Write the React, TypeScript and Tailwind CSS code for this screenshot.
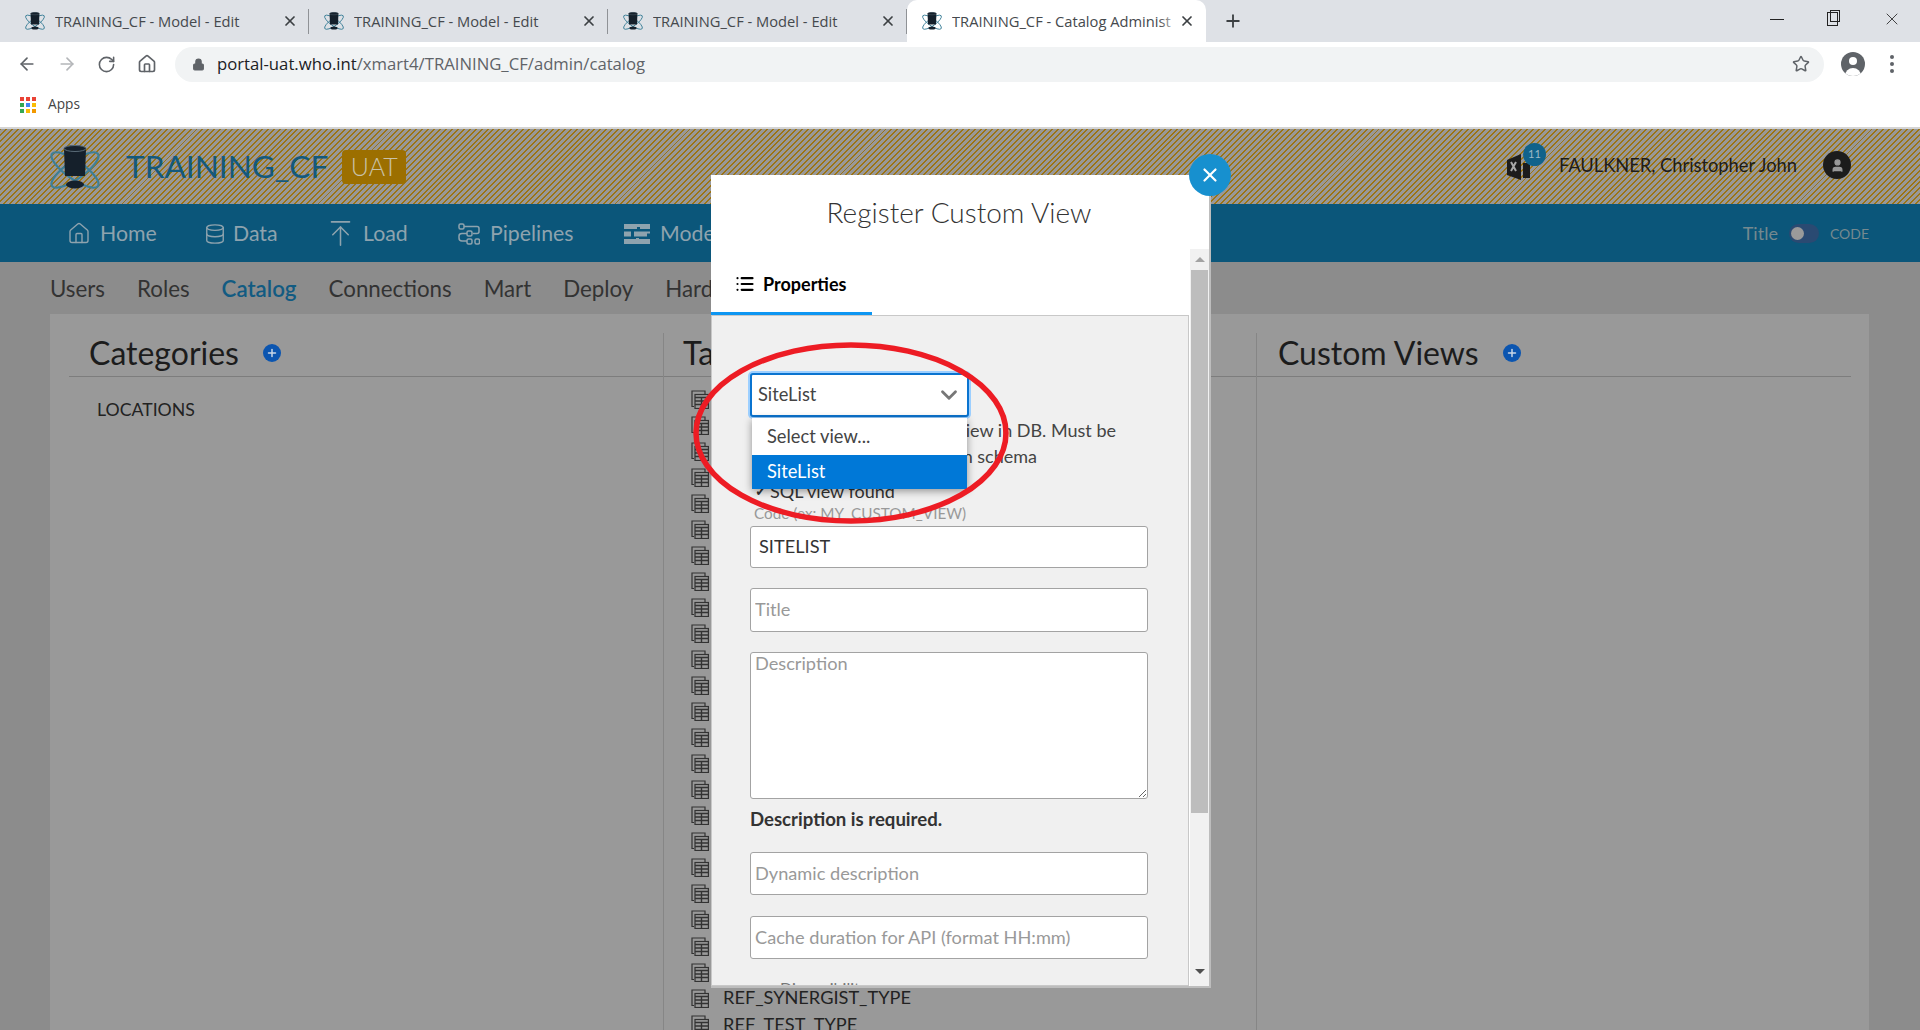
import React from 'react';
import {
  ArrowLeft,
  ArrowRight,
  ArrowUpToLine,
  ChevronDown,
  Database,
  Home,
  List,
  Lock,
  Plus,
  RotateCw,
  Star,
  User,
  X,
} from 'lucide-react';

const raleway = "font-['Lato','Open_Sans',sans-serif]";

const Logo: React.FC<{ className?: string }> = ({ className }) => (
  <svg viewBox="0 0 50 44" className={className}>
    <ellipse cx="25" cy="25" rx="9" ry="28" transform="rotate(-55 25 25)" fill="none" stroke="#3d7f98" strokeWidth="2.2" />
    <ellipse cx="25" cy="25" rx="9" ry="28" transform="rotate(55 25 25)" fill="none" stroke="#3d7f98" strokeWidth="2.2" />
    <path d="M14 4c0-5 22-5 22 0l-1 27H15z" fill="#15202b" />
    <ellipse cx="25" cy="3.5" rx="11" ry="3" fill="#15202b" stroke="#5a6c78" strokeWidth="1" />
    <ellipse cx="25" cy="39.5" rx="9" ry="4" fill="#15202b" />
  </svg>
);

const TableIcon: React.FC = () => (
  <svg viewBox="0 0 18 19" className="h-[19px] w-[18px] shrink-0" fill="none" stroke="#333" strokeWidth="1.2">
    <path d="M3 16.5H1V1h13v3" />
    <rect x="4" y="4.5" width="13.4" height="14" fill="none" />
    <path d="M4 7.5h13.4M4 11h13.4M4 14.5h13.4M10.5 7.5v11" strokeWidth="1.4" />
  </svg>
);

const PlusBadge: React.FC = () => (
  <span className="ml-[24px] flex h-[18px] w-[18px] items-center justify-center rounded-full bg-[#0b55b0]">
    <Plus className="h-3 w-3 text-[#c9d6e6]" strokeWidth={3} />
  </span>
);

const BrowserTab: React.FC<{ title: string; active?: boolean; last?: boolean }> = ({ title, active, last }) => (
  <div
    className={`relative flex h-[42px] w-[299px] items-center pl-[15px] ${active ? 'rounded-t-[10px] bg-white' : ''}`}
  >
    <Logo className="h-[20px] w-[20px]" />
    <span className="relative ml-[10px] w-[229px] overflow-hidden whitespace-nowrap text-[14.7px] text-[#45494d]">
      {title}
      {active && <span className="absolute right-0 top-0 h-full w-[22px] bg-gradient-to-r from-transparent to-white" />}
    </span>
    <X className="ml-[-2px] h-[16px] w-[16px] text-[#3c4043]" strokeWidth={2.6} />
    {!active && !last && <span className="absolute right-0 top-[9px] h-[25px] w-px bg-[#8f9296]" />}
  </div>
);

const NavItem: React.FC<{ icon: React.ReactNode; label: string; className: string }> = ({ icon, label, className }) => (
  <div className={`flex items-center ${className}`}>
    {icon}
    <span className="text-[21.3px] text-[#8ea3ae]">{label}</span>
  </div>
);

const tableRows = Array.from({ length: 23 }, () => '');

const Field: React.FC<{ placeholder: string; className: string; value?: string }> = ({ placeholder, className, value }) => (
  <input
    readOnly
    value={value}
    placeholder={placeholder}
    className={`block w-[398px] rounded-[3px] border border-[#a3a3a3] bg-white pb-[2px] text-[18.2px] text-[#333] outline-none placeholder:text-[#999] ${className}`}
  />
);

export default function App() {
  return (
    <div className={`relative h-[1030px] w-[1920px] overflow-hidden bg-[#8c8c8c] ${raleway}`}>
      {/* browser chrome */}
      <div className="font-['Open_Sans',sans-serif]">
        <div className="flex h-[42px] items-center bg-[#dee1e6] pl-[10px]">
          <BrowserTab title="TRAINING_CF - Model - Edit" />
          <BrowserTab title="TRAINING_CF - Model - Edit" />
          <BrowserTab title="TRAINING_CF - Model - Edit" />
          <BrowserTab title="TRAINING_CF - Catalog Administ" active last />
          <Plus className="ml-[17px] h-[20px] w-[20px] text-[#3c4043]" strokeWidth={2.2} />
          <div className="ml-auto flex items-center pb-[4px] pr-[18px]">
            <span className="h-px w-[14px] bg-[#222]" />
            <span className="relative ml-[43px] h-[14px] w-[11px] border border-[#222] bg-[#dee1e6] before:absolute before:left-[2px] before:top-[-3px] before:h-[12px] before:w-[10px] before:border before:border-[#222]" />
            <X className="ml-[44px] h-[20px] w-[20px] text-[#222]" strokeWidth={1} />
          </div>
        </div>
        <div className="flex h-[42px] items-center bg-white pl-[17px] pt-[2px]">
          <ArrowLeft className="h-[20px] w-[20px] text-[#5f6368]" />
          <ArrowRight className="ml-[20px] h-[20px] w-[20px] text-[#b4b6b9]" />
          <RotateCw className="ml-[20px] h-[19px] w-[19px] text-[#5f6368]" />
          <Home className="ml-[21px] h-[20px] w-[20px] text-[#5f6368]" />
          <div className="ml-[18px] flex h-[35px] w-[1649px] items-center rounded-full bg-[#f1f3f4] pl-[17px]">
            <Lock className="h-[13px] w-[13px] fill-[#5f6368] text-[#5f6368]" />
            <span className="ml-[12px] text-[16.7px] text-[#5f6368]">
              <span className="text-[#202124]">portal-uat.who.int</span>/xmart4/TRAINING_CF/admin/catalog
            </span>
            <Star className="ml-auto mr-[14px] h-[18px] w-[18px] text-[#5f6368]" />
          </div>
          <div className="relative ml-[17px] flex h-[24px] w-[24px] items-end justify-center overflow-hidden rounded-full bg-[#5f6368]">
            <span className="absolute top-[5px] h-[8px] w-[8px] rounded-full bg-white" />
            <span className="h-[8px] w-[16px] rounded-t-full bg-white" />
          </div>
          <div className="ml-[25px] flex flex-col gap-[3px]">
            <span className="h-[4px] w-[4px] rounded-full bg-[#5f6368]" />
            <span className="h-[4px] w-[4px] rounded-full bg-[#5f6368]" />
            <span className="h-[4px] w-[4px] rounded-full bg-[#5f6368]" />
          </div>
        </div>
        <div className="flex h-[43px] items-center bg-white pb-[2px] pl-[20px]">
          <div className="grid h-[16px] w-[16px] grid-cols-3 gap-[2px]">
            <span className="h-[4px] w-[4px] bg-[#ea4335]" />
            <span className="h-[4px] w-[4px] bg-[#ea4335]" />
            <span className="h-[4px] w-[4px] bg-[#ea4335]" />
            <span className="h-[4px] w-[4px] bg-[#34a853]" />
            <span className="h-[4px] w-[4px] bg-[#4285f4]" />
            <span className="h-[4px] w-[4px] bg-[#fbbc05]" />
            <span className="h-[4px] w-[4px] bg-[#34a853]" />
            <span className="h-[4px] w-[4px] bg-[#fbbc05]" />
            <span className="h-[4px] w-[4px] bg-[#f29900]" />
          </div>
          <span className="ml-[12px] text-[13.7px] text-[#444]">Apps</span>
        </div>
        <div className="h-[2px] bg-[#d4d4d4]" />
      </div>

      {/* app header */}
      <div className="flex h-[75px] items-center bg-[repeating-linear-gradient(135deg,#9c7414_0,#9c7414_1.4px,#989898_1.4px,#989898_4.2px)] pl-[50px] pr-[69px]">
        <Logo className="h-[44px] w-[50px]" />
        <span className="ml-[26px] text-[31.6px] leading-none text-[#13597d]">TRAINING_CF</span>
        <span className="ml-[14px] flex h-[34px] w-[64px] items-center justify-center rounded-[4px] bg-[#9c6f00] text-[25px] font-light text-[#c9c2a8]">UAT</span>
        <div className="relative ml-auto h-[28px] w-[26px]">
          <svg viewBox="0 0 26 28" className="h-[28px] w-[26px]">
            <path d="M0 7 14 1v26L0 22z" fill="#1c1c1c" />
            <path d="M16 10h7v15h-7z" fill="#1c1c1c" />
            <path d="m4 9 5 9M9 9l-5 9" stroke="#a9a9a9" strokeWidth="2" />
          </svg>
          <span className="absolute left-[16px] top-[-10px] flex h-[23px] w-[23px] items-center justify-center rounded-full bg-[#10628b] text-[11px] text-[#9eb9c6]">11</span>
        </div>
        <span className="ml-[26px] pb-[2px] text-[18.3px] text-[#1c1c1c]">FAULKNER, Christopher John</span>
        <span className="mb-[3px] ml-[26px] flex h-[28px] w-[28px] items-center justify-center rounded-full bg-[#1c1c1c]">
          <User className="h-[15px] w-[15px] fill-[#9a9a9a] text-[#9a9a9a]" />
        </span>
      </div>

      {/* main nav */}
      <div className="flex h-[58px] items-center bg-[#0b567a] pl-[67px] pr-[51px] pt-px">
        <NavItem className="w-[137px]" icon={<Home className="mr-[9px] h-[25px] w-[24px] text-[#8ea3ae]" strokeWidth={1.4} />} label="Home" />
        <NavItem className="w-[121px]" icon={<Database className="mr-[7px] h-[24px] w-[22px] text-[#8ea3ae]" strokeWidth={1.5} />} label="Data" />
        <NavItem className="w-[133px]" icon={<ArrowUpToLine className="mr-[7px] h-[31px] w-[31px] text-[#8ea3ae]" strokeWidth={1.2} />} label="Load" />
        <NavItem
          className="w-[166px]"
          icon={
            <svg viewBox="0 0 22 22" className="mr-[10px] h-[22px] w-[22px]" fill="none" stroke="#8ea3ae" strokeWidth="1.5">
              <rect x="1" y="1" width="5" height="5" rx="1.5" />
              <path d="M6 3.5h13c1.5 0 2 1 2 2v3c0 1.5-1 2-2 2H15" />
              <rect x="9" y="8" width="5" height="5" rx="1.5" />
              <path d="M9 10.5H4c-2 0-3 1-3 2.5v2c0 2 1 3 3 3h5" />
              <rect x="9" y="16" width="5" height="5" rx="1.5" />
              <rect x="17" y="16" width="4.5" height="5" rx="1.5" />
            </svg>
          }
          label="Pipelines"
        />
        <NavItem
          className=""
          icon={
            <svg viewBox="0 0 26 20" className="mr-[10px] h-[20px] w-[26px]" fill="#8ea3ae">
              <path d="M0 0h26v5H16V3h-3v2H0zM0 7.5h7v5H0zM10 7.5h16v2h-3v3H10zM0 15h12v-1h3v1h11v5H0z" />
            </svg>
          }
          label="Model"
        />
        <div className="ml-auto flex items-center">
          <span className="text-[18px] text-[#75898f]">Title</span>
          <span className="ml-[11px] flex h-[19px] w-[30px] items-center rounded-full bg-[#2a4a72] pl-[2px]">
            <span className="h-[13px] w-[13px] rounded-full bg-[#9a9a9a]" />
          </span>
          <span className="ml-[11px] text-[14px] text-[#75898f]">CODE</span>
        </div>
      </div>

      {/* admin sub nav */}
      <div className="flex h-[52px] items-center gap-[32px] pl-[50px] pt-[2px] text-[22.3px] text-[#333]">
        <span>Users</span>
        <span>Roles</span>
        <span className="font-semibold text-[#125b82]">Catalog</span>
        <span>Connections</span>
        <span>Mart</span>
        <span>Deploy</span>
        <span>Hardware</span>
      </div>

      {/* catalog panel */}
      <div className="ml-[50px] h-[716px] w-[1819px] bg-[#999] px-[19px] pt-[19px] text-[#222]">
        <div className="grid grid-cols-[594px_593px_595px]">
          <div>
            <div className="flex h-[44px] items-center border-b border-[#7d7d7d] pb-[4px] pl-[20px]">
              <span className="text-[32px] text-[#1c1c1c]">Categories</span>
              <PlusBadge />
            </div>
            <p className="mt-[20px] pl-[28px] text-[17.7px]">LOCATIONS</p>
          </div>
          <div className="h-[697px] border-l border-[#868686]">
            <div className="flex h-[44px] items-center border-b border-[#7d7d7d] pb-[4px] pl-[19px]">
              <span className="text-[32px] text-[#1c1c1c]">Tables</span>
            </div>
            <div className="pl-[27px] pt-[9px]">
              {tableRows.map((name, i) => (
                <div key={i} className="flex h-[26.05px] items-center gap-[14px]">
                  <TableIcon />
                  <span className="text-[18px]">{name}</span>
                </div>
              ))}
              <div className="flex h-[26.05px] items-center gap-[14px]">
                <TableIcon />
                <span className="text-[18.2px]">REF_SYNERGIST_TYPE</span>
              </div>
              <div className="flex h-[26.05px] items-center gap-[14px]">
                <TableIcon />
                <span className="text-[18.2px]">REF_TEST_TYPE</span>
              </div>
            </div>
          </div>
          <div className="h-[697px] border-l border-[#868686]">
            <div className="flex h-[44px] items-center border-b border-[#7d7d7d] pb-[4px] pl-[21px]">
              <span className="text-[32px] text-[#1c1c1c]">Custom Views</span>
              <PlusBadge />
            </div>
          </div>
        </div>
      </div>

      {/* register custom view modal */}
      <div className="absolute left-[711px] top-[175px] flex h-[813px] w-[500px] flex-col overflow-hidden border-r-2 border-b-2 border-[#bdbdbd] bg-white">
        <div className="flex h-[74px] shrink-0 items-center justify-center pr-[2px]">
          <h2 className="text-[28px] font-light text-[#333]">Register Custom View</h2>
        </div>
        <div className="flex min-h-0 flex-1">
          <div className="flex w-[478px] flex-col">
            <div className="h-[66px] shrink-0">
              <div className="flex h-[66px] w-[161px] items-center border-b-[3px] border-[#0d96f2] pt-[7px] pl-[24px]">
                <List className="h-[20px] w-[20px] text-black" strokeWidth={2.6} />
                <span className="ml-[8px] text-[18px] font-bold text-black">Properties</span>
              </div>
            </div>
            <div className="flex-1 overflow-hidden border border-[#c8c8c8] bg-[#f0f0f0] pl-[38px] pt-[57px]">
              <div className="flex h-[44px] w-[219px] items-center justify-between rounded-[3px] border-2 border-[#0a74d0] bg-white pl-[6px] pr-[5px] text-[18.3px] text-[#444] shadow-[0_0_0_2px_#9ccfff]">
                <span>SiteList</span>
                <ChevronDown className="h-[26px] w-[26px] text-[#777]" strokeWidth={2.6} />
              </div>
              <div className="text-[18px] leading-[26px] text-[#444]">
                <p className="w-[366px] whitespace-nowrap text-right">Name of the SQL view in DB. Must be</p>
                <p className="w-[287px] whitespace-nowrap text-right">in the custom schema</p>
              </div>
              <div className="mt-[9px] flex h-[26px] items-center pl-[5px] text-[18px] leading-[26px] text-[#333]">
                <span className="text-[14px] font-bold">✓</span>
                <span className="ml-[3px]">SQL view found</span>
              </div>
              <p className="h-[18px] pl-[4px] text-[15.3px] leading-[18px] text-[#999]">Code (ex: MY_CUSTOM_VIEW)</p>
              <Field className="mt-[4px] h-[42px] pl-[8px]" placeholder="" value="SITELIST" />
              <Field className="mt-[20px] h-[44px] pl-[4px]" placeholder="Title" />
              <textarea
                readOnly
                placeholder="Description"
                className="mt-[20px] block h-[147px] w-[398px] rounded-[3px] border border-[#a3a3a3] bg-white pl-[4px] text-[18.2px] leading-[20px] outline-none placeholder:text-[#999]"
              />
              <p className="mt-[8px] h-[24px] text-[18.6px] font-bold leading-[24px] text-[#333]">Description is required.</p>
              <Field className="mt-[21px] h-[43px] pl-[4px]" placeholder="Dynamic description" />
              <Field className="mt-[21px] h-[43px] pl-[4px]" placeholder="Cache duration for API (format HH:mm)" />
              <p className="mt-[17px] pl-[30px] text-[16px] text-[#777]">Disponibility</p>
            </div>
          </div>
          <div className="ml-[1px] flex w-[19px] flex-col items-center bg-[#f1f1f1] pt-[8px]">
            <span className="h-0 w-0 border-x-[5px] border-b-[5px] border-x-transparent border-b-[#a3a3a3]" />
            <span className="mt-[8px] h-[543px] w-[17px] bg-[#bdbdbd]" />
            <span className="mt-[156px] h-0 w-0 border-x-[5px] border-t-[5px] border-x-transparent border-t-[#505050]" />
          </div>
        </div>
      </div>

      <button className="absolute left-[1189px] top-[154px] flex h-[42px] w-[42px] items-center justify-center rounded-full bg-[#1790cf]">
        <X className="h-[22px] w-[22px] text-white" strokeWidth={2.4} />
      </button>

      {/* open select menu */}
      <div className="absolute left-[752px] top-[418px] w-[215px] bg-white text-[18.3px] text-[#444] shadow-[0_2px_8px_rgba(0,0,0,0.4)]">
        <div className="flex h-[37px] items-center pl-[15px]">Select view...</div>
        <div className="flex h-[34px] items-center bg-[#0078d7] pl-[15px] text-white">SiteList</div>
      </div>

      {/* red annotation */}
      <svg className="pointer-events-none absolute left-[690px] top-[338px] h-[190px] w-[322px]" viewBox="0 0 322 190" fill="none">
        <ellipse cx="161" cy="95" rx="155" ry="88" stroke="#ed1c24" strokeWidth="5.5" />
      </svg>
    </div>
  );
}
